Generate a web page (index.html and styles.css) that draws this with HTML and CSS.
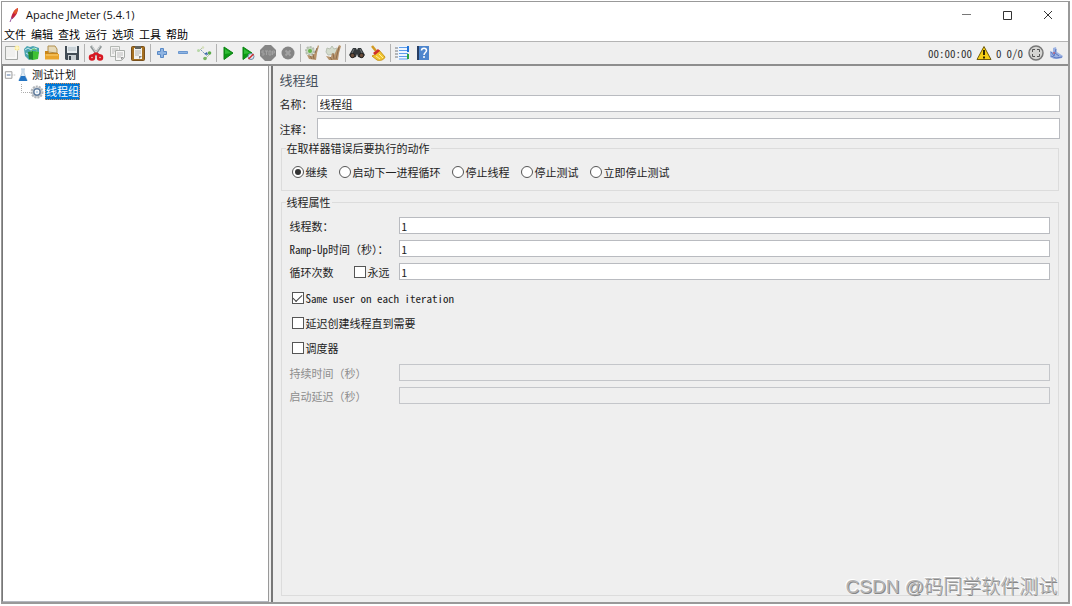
FILE: index.html
```html
<!DOCTYPE html>
<html lang="zh-CN">
<head>
<meta charset="utf-8">
<title>Apache JMeter (5.4.1)</title>
<link rel="stylesheet" href="styles.css">
</head>
<body>
<div class="window">
  <header class="titlebar">
    <svg class="feather" viewBox="0 0 12 16"><path d="M10 1C7 2 4 6 3 11l1 1C7 10 10 6 10 1z" fill="#c4223e"/><path d="M10 1C7 2 6 4 5 6l3 1c1-2 2-4 2-6z" fill="#e2582c"/><path d="M3 10l2 1-1 1z" fill="#713088"/><path d="M4 10l-2 5" stroke="#9a5b9e"/></svg>
    <h1 class="app-name">Apache JMeter (5.4.1)</h1>
    <div class="win-controls">
      <button aria-label="最小化"><svg viewBox="0 0 12 12"><path d="M2 5.500h9" stroke="#777"/></svg></button>
      <button aria-label="最大化"><svg viewBox="0 0 12 12"><path d="M2.500 2.500h8v8h-8z" fill="none" stroke="#333"/></svg></button>
      <button aria-label="关闭"><svg viewBox="0 0 12 12"><path d="M2 2l8 8M10 2l-8 8" stroke="#333"/></svg></button>
    </div>
  </header>

  <nav class="menubar">
    <button>文件</button><button>编辑</button><button>查找</button><button>运行</button><button>选项</button><button>工具</button><button>帮助</button>
  </nav>

  <div class="toolbar">
    <div class="group group-tight">
      <button aria-label="新建"><svg viewBox="0 0 16 16"><path d="M1.500 1.500h12v13h-12z" fill="#f0f0ee" stroke="#a5a8a5"/><path d="M3 13h9V4" fill="none" stroke="#fff"/><circle cx="13" cy="3" r="2.500" fill="#f6e58e"/><path d="M13 0v6M10 3h6" stroke="#fffbd8"/></svg></button>
      <button aria-label="模板"><svg viewBox="0 0 16 16"><path d="M0 4l3-3 3 1 3-1 6 2v5l-6 6-4 1-4-4z" fill="#4aa3b0"/><path d="M1 5l3-2 3 2 3-2 3 1M2 8l3 2" fill="none" stroke="#c9eef2"/><path d="M4 7l5-1v9l-4-1z" fill="#1f8a2c"/><path d="M9 6l6 1-1 7-5 1z" fill="#3fc233"/><path d="M7 7c0-4 6-4 6 0" fill="none" stroke="#6fcf60"/></svg></button>
      <button aria-label="打开"><svg viewBox="0 0 16 16"><path d="M4 7V1h7l2 3v4z" fill="#e6d9b8" stroke="#b08f4e"/><path d="M1 6h3l1 2h9v6H1z" fill="#c98518"/><path d="M1 9h14v5.500H1z" fill="#e9a52c"/><path d="M2 10h12" stroke="#f9cf77"/></svg></button>
      <button aria-label="保存"><svg viewBox="0 0 16 16"><path d="M1 1h14v14H2l-1-1z" fill="#424c55"/><path d="M3 1h10v7H3z" fill="#e8edf0"/><path d="M4 3h8M4 5h8" stroke="#abb7be"/><path d="M4 10h8v5H4z" fill="#c8ced2"/><path d="M5 11h2v4H5z" fill="#39434c"/></svg></button>
    </div>
    <span class="sep"></span>
    <div class="group">
      <button aria-label="剪切"><svg viewBox="0 0 16 16"><path d="M3 1l7 10M13 1L6 11" stroke="#8f9697" stroke-width="2.500"/><path d="M4 1l5 8M12 1L7 9" stroke="#d5d8d8"/><path d="M8 8l4 3M8 8l-4 3" stroke="#d71822" stroke-width="2.500"/><circle cx="4" cy="12.500" r="2" fill="#f4dada" stroke="#d71822" stroke-width="2.500"/><circle cx="12" cy="12.500" r="2" fill="#f4dada" stroke="#d71822" stroke-width="2.500"/></svg></button>
      <button aria-label="复制"><svg viewBox="0 0 16 16"><path d="M1.500 1.500h9v10h-9z" fill="#f2f2f1" stroke="#b4b8b4"/><path d="M3 4h6M3 6h3M3 8h2" stroke="#bbb"/><path d="M6.500 5.500h9v7l-3 3h-6z" fill="#f7f7f6" stroke="#a8aca8"/><path d="M8 8h6M8 10h6M8 12h4" stroke="#bbb"/><path d="M12 15v-3h3z" fill="#999"/></svg></button>
      <button aria-label="粘贴"><svg viewBox="0 0 16 16"><rect x="1.500" y="1.500" width="13" height="14" rx="1" fill="#a6701f" stroke="#79501a"/><path d="M4 3h8v11H4z" fill="#f3f3ef"/><path d="M5 1h6v3H5z" fill="#62645f"/><path d="M5 6h6M5 8h6M5 10h4" stroke="#b4b4b0"/><path d="M9 14v-3h3z" fill="#888"/></svg></button>
    </div>
    <span class="sep"></span>
    <div class="group">
      <button aria-label="展开"><svg viewBox="0 0 16 16"><path d="M6.500 3.500h3v3h3v3h-3v3h-3v-3h-3v-3h3z" fill="#8fb4e2" stroke="#5a8ac6"/></svg></button>
      <button aria-label="折叠"><svg viewBox="0 0 16 16"><path d="M3.500 6.500h9v2h-9z" fill="#8fb4e2" stroke="#6a97cf"/></svg></button>
      <button aria-label="切换"><svg viewBox="0 0 16 16"><path d="M2 7l5-5M9 14l5-5" stroke="#b3c4a8"/><path d="M5 5l6 6" stroke="#7898bd" stroke-dasharray="2 1"/><circle cx="2.500" cy="5.500" r="1.500" fill="#b8d8a8"/><circle cx="7" cy="2.500" r="1.200" fill="#d4dfb9"/><circle cx="13.500" cy="8" r="1.800" fill="#5cab4b"/><circle cx="9" cy="13.500" r="1.800" fill="#76b45f"/><path d="M8 9l4 1-1-3z" fill="#3864a8"/></svg></button>
    </div>
    <span class="sep"></span>
    <div class="group group-tight">
      <button aria-label="启动"><svg viewBox="0 0 16 16"><path d="M4 2l9 6-9 6.500z" fill="#0b9a14" stroke="#0b8213"/><path d="M5 4l6 4-6 1z" fill="#31bc36"/></svg></button>
      <button aria-label="不停顿开始"><svg viewBox="0 0 16 16"><path d="M3 2l9 6-9 6.500z" fill="#0b9a14" stroke="#0b8213"/><path d="M4 4l6 4-6 1z" fill="#31bc36"/><circle cx="11" cy="11.500" r="3" fill="#dde7f2" stroke="#6e89a8"/><path d="M8.500 14l5-5" stroke="#d32c2c" stroke-width="1.500"/></svg></button>
      <button aria-label="停止" disabled><svg viewBox="0 0 16 16"><path d="M5 0h6l5 5v6l-5 5H5l-5-5V5z" fill="#858585"/><path d="M4 6H2v2h2v2H2M5 6h3M6.500 6v4M9 6h2v4H9zM12.500 10V6h2v2h-2" fill="none" stroke="#a2a2a2"/></svg></button>
      <button aria-label="关闭线程" disabled><svg viewBox="0 0 16 16"><circle cx="8" cy="8" r="6.500" fill="#858585"/><path d="M5.500 5.500l5 5M10.500 5.500l-5 5" stroke="#a2a2a2" stroke-width="2"/></svg></button>
    </div>
    <span class="sep"></span>
    <div class="group">
      <button aria-label="清除"><svg viewBox="0 0 16 16"><circle cx="6" cy="6" r="4" fill="#c9d7c2" stroke="#b3bbaf" stroke-width="2" stroke-dasharray="2 1"/><circle cx="6" cy="6" r="2" fill="#65b448"/><path d="M14 0l1 1-2 7-1 7-7-1-2-4 5 1 3-3z" fill="#b8946b"/><path d="M6 11l2 3M9 9l1 5M13 3l-2 5" stroke="#8c6d4c"/></svg></button>
      <button aria-label="清除全部"><svg viewBox="0 0 16 16"><path d="M2 3l3 1 2-3 2 3 3-1-1 6-8 1-2-3z" fill="#d4dccd" stroke="#b8c0b2"/><path d="M14 0l2 1-2 7-1 7-9 0-3-4 5 1 1-4 2 2z" fill="#b8946b"/><path d="M5 12l2 3M8 8l1 6M14 2l-3 12" stroke="#8c6d4c"/></svg></button>
    </div>
    <span class="sep"></span>
    <div class="group">
      <button aria-label="查找"><svg viewBox="0 0 16 16"><path d="M4 3h3l1 2 1-2h3l4 7-3 3-4-1-1-3-1 3-4 1-3-3z" fill="#33383b"/><circle cx="3.500" cy="10.500" r="2.200" fill="#6b4e3b" stroke="#222"/><circle cx="12.500" cy="10.500" r="2.200" fill="#6b4e3b" stroke="#222"/><path d="M5 4l-2 4M11 4l2 4" stroke="#737a7c"/></svg></button>
      <button aria-label="重置查找"><svg viewBox="0 0 16 16"><path d="M2 1l4 5" stroke="#d29a24" stroke-width="2.500"/><path d="M9 5l6 7c-1 3-5 4-8 3l-5-4c3-1 5-3 6-5z" fill="#f1c52f" stroke="#c8951c"/><path d="M3 8l5-4 2 2-5 4z" fill="#cf302a"/><path d="M6 11l4 3M9 9l4 4" stroke="#fff0a0"/></svg></button>
    </div>
    <span class="sep"></span>
    <div class="group">
      <button aria-label="函数助手"><svg viewBox="0 0 16 16"><path d="M2 1h12v14H2z" fill="#edf5ff"/><path d="M1 3h3M1 6h3M1 9h3M1 12h3" stroke="#777"/><path d="M5 2.500h9M5 5.500h9M5 8.500h9M5 11.500h9M5 14h9" stroke="#5d9deb"/><path d="M14 1v6" stroke="#2272d6" stroke-width="2"/><path d="M14 9v5" stroke="#26a442" stroke-width="2"/></svg></button>
      <button aria-label="帮助"><svg viewBox="0 0 16 16"><path d="M2 1h12v14H2z" fill="#4e86cd"/><path d="M2 1h2v14H2z" fill="#263d62"/><path d="M6.500 5.500c0-3 5-3 5 0 0 2-2.500 2-2.500 4.500M9 11v2" fill="none" stroke="#fff" stroke-width="1.500"/></svg></button>
    </div>

    <div class="status half">
      <span>00:00:00</span>
      <svg viewBox="0 0 16 16"><path d="M8 1.500l7 13H1z" fill="#f6cf16" stroke="#6f5b09" stroke-linejoin="round"/><path d="M8 5v5M8 11.500v2" stroke="#302800" stroke-width="2"/></svg>
      <span>0</span>
      <span class="threads">0/0</span>
      <svg viewBox="0 0 16 16"><circle cx="8" cy="8" r="7" fill="#d4d4d2" stroke="#777" stroke-width="1.500"/><path d="M4.500 7V4.500H7M9 4.500h2.500V7M11.500 9v2.500H9M7 11.500H4.500V9" fill="none" stroke="#555"/></svg>
      <svg viewBox="0 0 16 16"><path d="M2 6l3 1V3l3-1 1 5 3 2 3 2-1 2-4 1H6l-4-2z" fill="#9db3e2"/><path d="M3 7l3 4 2-7M3 11l5 2 6-1M7 8l4 3" fill="none" stroke="#5a77c2"/><circle cx="6" cy="8" r="1" fill="#bb677e"/></svg>
    </div>
  </div>

  <div class="workspace">
    <aside class="tree">
      <div class="node">
        <svg class="branch" viewBox="0 0 16 16"><path d="M2.500 4.500h7v7h-7z" fill="#fff" stroke="#9a9a9a"/><path d="M4 8h4" stroke="#456799"/><path d="M10 8h4" stroke="#aaa" stroke-dasharray="1 1"/></svg>
        <svg class="flask" viewBox="0 0 10 14"><path d="M3 1h4M4 1v4L1 12h8L6 5V1" fill="#e1edf6" stroke="#b7cbdc"/><path d="M3 8h4l2.500 5h-9z" fill="#2374c3"/></svg>
        <span class="node-name">测试计划</span>
      </div>
      <div class="node child">
        <svg class="elbow" viewBox="0 0 9 16"><path d="M.5 0v8.500H9" fill="none" stroke="#aaa" stroke-dasharray="1 1"/></svg>
        <svg class="gear" viewBox="0 0 14 14"><circle cx="7" cy="7" r="5.500" fill="#d4d8dc" stroke="#b2b6ba" stroke-width="2" stroke-dasharray="2 1"/><circle cx="7" cy="7" r="3.200" fill="#fff" stroke="#66809f" stroke-width="1.500"/><circle cx="7" cy="7" r="1.300" fill="#c0d7ed"/></svg>
        <span class="node-name selected">线程组</span>
      </div>
    </aside>
    <div class="divider"></div>

    <main class="editor">
      <h2>线程组</h2>
      <div class="field"><label for="name">名称：</label><input id="name" type="text" value="线程组"></div>
      <div class="field tall"><label for="comment">注释：</label><input id="comment" type="text"></div>

      <fieldset class="actions">
        <legend>在取样器错误后要执行的动作</legend>
        <div class="choices">
          <label><input type="radio" name="action" checked>继续</label>
          <label><input type="radio" name="action">启动下一进程循环</label>
          <label><input type="radio" name="action">停止线程</label>
          <label><input type="radio" name="action">停止测试</label>
          <label><input type="radio" name="action">立即停止测试</label>
        </div>
      </fieldset>

      <fieldset class="properties">
        <legend>线程属性</legend>
        <div class="prop"><label for="threads">线程数：</label><input id="threads" class="half" type="text" value="1"></div>
        <div class="prop"><label for="ramp"><span class="half">Ramp-Up</span>时间（秒）：</label><input id="ramp" class="half" type="text" value="1"></div>
        <div class="prop"><div class="loop"><label for="loops">循环次数</label><label class="check"><input type="checkbox">永远</label></div><input id="loops" class="half" type="text" value="1"></div>
        <div class="checks">
          <label class="check half"><input type="checkbox" checked>Same user on each iteration</label>
          <label class="check"><input type="checkbox">延迟创建线程直到需要</label>
          <label class="check"><input type="checkbox">调度器</label>
        </div>
        <div class="prop off"><label for="duration">持续时间（秒）</label><input id="duration" type="text" disabled></div>
        <div class="prop off"><label for="delay">启动延迟（秒）</label><input id="delay" type="text" disabled></div>
      </fieldset>
    </main>
  </div>
  <div class="watermark">CSDN @码同学软件测试</div>
</div>
</body>
</html>
```
FILE: styles.css
```css
* { box-sizing: border-box; }

body {
  margin: 0;
  padding: 1px 2px 2px 1px;
  height: 100vh;
  background: #fff;
  color: #222;
  font: 11px/14px "Noto Sans CJK SC", sans-serif;
}

button, input { font: inherit; color: inherit; }
button { padding: 0; border: 0; background: none; }
svg { display: block; flex: none; width: 16px; height: 16px; }

/* Half-width Latin letters and digits */
.half { font-feature-settings: "hwid"; }

.window {
  position: relative;
  display: flex;
  flex-direction: column;
  height: 100%;
  border: 1px solid #999;
  border-right-width: 2px;
  border-bottom-width: 2px;
  background: #efefef;
}

.titlebar {
  display: flex;
  align-items: center;
  height: 25px;
  padding-left: 6px;
  background: #fff;
}
.feather { width: 12px; height: 16px; }
.app-name {
  flex: 1;
  margin: 0 0 0 6px;
  font: 11px/16px "Open Sans", sans-serif;
  color: #111;
}
.win-controls { display: flex; }
.win-controls button { display: grid; place-items: center; width: 41px; height: 24px; }
.win-controls svg { width: 12px; height: 12px; }

.menubar {
  display: flex;
  gap: 5px;
  height: 14px;
  padding-left: 2px;
  background: #fff;
}
.menubar button { color: #000; line-height: 12px; }

.toolbar {
  display: flex;
  align-items: center;
  height: 25px;
  padding: 0 4px 0 2px;
  border-top: 1px solid #b4b4b4;
  border-bottom: 2px solid #8e8e8e;
}
.group { display: flex; gap: 5px; }
.group-tight { gap: 4px; }
.sep { width: 1px; height: 18px; margin: 0 3px 0 4px; background: #b2b2b2; }
.status { display: flex; align-items: center; gap: 4px; margin-left: auto; color: #333; }
.threads { margin: 0 1px; }

.workspace { display: flex; flex: 1; min-height: 0; }
.tree {
  flex: 0 0 25%;
  border-left: 1px solid #777;
  border-right: 1px solid #999;
  border-bottom: 1px solid #b5b8c0;
  background: #fff;
}
.node { display: flex; align-items: center; height: 17px; color: #111; }
.branch { width: 15px; }
.flask { width: 10px; height: 14px; }
.node-name { margin-left: 4px; line-height: 13px; padding-bottom: 1px; }
.child { padding-left: 18px; }
.elbow { width: 9px; }
.gear { width: 14px; height: 14px; }
.selected {
  margin-left: 1px;
  padding: 1px 0;
  border: 1px dotted #e09050;
  background: #0078d7;
  color: #fff;
}
.divider { flex: none; width: 4px; border-right: 2px solid #777; background: #efefef; }

.editor {
  display: flex;
  flex: 1;
  flex-direction: column;
  min-width: 0;
  padding: 5px 8px 6px 7px;
}
h2 { margin: 0 0 6px; font-size: 13px; line-height: 18px; font-weight: 400; color: #47505c; }

input[type="text"] {
  flex: 1;
  min-width: 0;
  height: 17px;
  padding: 0 2px;
  border: 1px solid #b9bbc0;
  background: #fff;
  line-height: 14px;
}
input[type="text"]:disabled { background: #efefef; border-color: #c4c6ca; }

.field { display: flex; align-items: center; margin-bottom: 6px; }
.field label { flex: none; width: 37px; }
.tall { margin-bottom: 2px; }
.tall input[type="text"] { height: 21px; }

fieldset { min-width: 0; margin: 0 1px; padding: 0 8px; border: 1px solid #dcdcdc; }
legend { margin-left: -4px; padding: 0 1px; line-height: 14px; }
.choices { display: flex; flex-wrap: wrap; gap: 11px; padding: 10px 2px 11px; }
.choices label, .check { display: flex; align-items: center; gap: 2px; }

input[type="radio"], input[type="checkbox"] {
  appearance: none;
  display: grid;
  place-items: center;
  flex: none;
  width: 12px;
  height: 12px;
  margin: 0;
  border: 1px solid #555;
  background: #fff;
}
input[type="radio"] { border-radius: 50%; }
input[type="radio"]:checked::before {
  content: "";
  width: 6px;
  height: 6px;
  border-radius: 50%;
  background: #333;
}
input[type="checkbox"]:checked::before {
  content: "";
  width: 8px;
  height: 4px;
  border: solid #444;
  border-width: 0 0 1px 1px;
  transform: rotate(-45deg) translate(1px, -1px);
}

.properties { flex: 1; margin-top: 4px; }
.prop { display: flex; align-items: center; margin-bottom: 6px; }
.properties legend { margin-bottom: 8px; }
.prop > :first-child { flex: none; width: 109px; }
.loop { display: flex; align-items: center; justify-content: space-between; padding-right: 9px; }
.checks { display: grid; gap: 11px; justify-content: start; padding: 5px 2px 9px; }
.off { color: #8d8d8d; }

.watermark {
  position: absolute;
  right: 11px;
  bottom: 2px;
  font-family: "Liberation Sans", "Noto Sans CJK SC", sans-serif;
  font-size: 19px;
  line-height: 26px;
  font-weight: 300;
  color: #b4b4b4;
  text-shadow: 1px 1px 0 #888, -1px -1px 0 #fff;
  pointer-events: none;
}
```
